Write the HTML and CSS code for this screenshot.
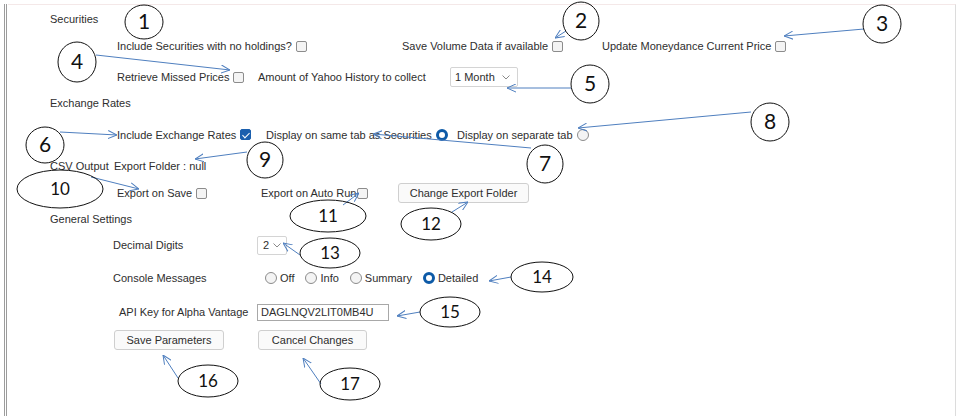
FILE: index.html
```html
<!DOCTYPE html>
<html>
<head>
<meta charset="utf-8">
<title>Parameters</title>
<link rel="stylesheet" href="styles.css">
</head>
<body>
<div class="frame">
  <div class="panel">
    <div class="heading h-sec">Securities</div>

    <div class="row r1">
      <div class="cell w285"><span class="lbl">Include Securities with no holdings?</span><span class="box"></span></div>
      <div class="cell w200"><span class="lbl">Save Volume Data if available</span><span class="box"></span></div>
      <div class="cell"><span class="lbl">Update Moneydance Current Price</span><span class="box"></span></div>
    </div>

    <div class="row r2">
      <div class="cell w141"><span class="lbl">Retrieve Missed Prices</span><span class="box"></span></div>
      <div class="cell w192"><span class="lbl">Amount of Yahoo History to collect</span></div>
      <div class="select sel-month"><span>1 Month</span><svg class="chev" width="8" height="5" viewBox="0 0 8 5"><polyline points="0.5,0.5 4,4 7.5,0.5" fill="none" stroke="#8a8a8a" stroke-width="1"/></svg></div>
    </div>

    <div class="heading h-ex">Exchange Rates</div>

    <div class="row r3">
      <div class="cell w149"><span class="lbl">Include Exchange Rates</span><span class="box on"></span></div>
      <div class="cell w191"><span class="lbl">Display on same tab as Securities</span><span class="radio on"></span></div>
      <div class="cell"><span class="lbl">Display on separate tab</span><span class="radio"></span></div>
    </div>

    <div class="heading h-csv"><span class="csv-title">CSV Output</span><span class="lbl">Export Folder : null</span></div>

    <div class="row r4">
      <div class="cell w144"><span class="lbl">Export on Save</span><span class="box"></span></div>
      <div class="cell w137"><span class="lbl">Export on Auto Run</span><span class="box tight"></span></div>
      <div class="btn btn-export">Change Export Folder</div>
    </div>

    <div class="heading h-gen">General Settings</div>

    <div class="grow g-dec">
      <span class="glabel">Decimal Digits</span>
      <div class="select sel-dec"><span>2</span><svg class="chev" width="8" height="5" viewBox="0 0 8 5"><polyline points="0.5,0.5 4,4 7.5,0.5" fill="none" stroke="#8a8a8a" stroke-width="1"/></svg></div>
    </div>

    <div class="grow g-con">
      <span class="glabel">Console Messages</span>
      <div class="radios">
        <div class="opt"><span class="radio"></span><span class="lbl">Off</span></div>
        <div class="opt"><span class="radio"></span><span class="lbl">Info</span></div>
        <div class="opt"><span class="radio"></span><span class="lbl">Summary</span></div>
        <div class="opt"><span class="radio on"></span><span class="lbl">Detailed</span></div>
      </div>
    </div>

    <div class="grow g-api">
      <span class="glabel api">API Key for Alpha Vantage</span>
      <div class="input">DAGLNQV2LIT0MB4U</div>
    </div>

    <div class="btnrow">
      <div class="btn btn-save">Save Parameters</div>
      <div class="btn btn-cancel">Cancel Changes</div>
    </div>
  </div>
</div>

<svg class="notes" width="960" height="416" viewBox="0 0 960 416">
  <defs>
    <marker id="ah" viewBox="0 0 10 10" refX="10" refY="5" markerWidth="9" markerHeight="9" markerUnits="userSpaceOnUse" orient="auto">
      <path d="M0,0.5 L10,5 L0,9.5" fill="none" stroke="#4f7fbf" stroke-width="1.1"/>
    </marker>
  </defs>
  <g class="arrows" stroke="#4f7fbf" stroke-width="1" fill="none" marker-end="url(#ah)">
    <line x1="566" y1="31" x2="555" y2="38"/>
    <line x1="864" y1="29" x2="784" y2="36"/>
    <line x1="96" y1="55" x2="230" y2="70"/>
    <line x1="571" y1="88" x2="507" y2="88"/>
    <line x1="60" y1="132" x2="117" y2="135"/>
    <line x1="531" y1="148" x2="373" y2="134"/>
    <line x1="751" y1="112" x2="578" y2="128"/>
    <line x1="247" y1="152" x2="195" y2="159"/>
    <line x1="91" y1="177" x2="139" y2="189"/>
    <line x1="343" y1="205" x2="359" y2="193"/>
    <line x1="452" y1="212" x2="468" y2="202"/>
    <line x1="300" y1="255" x2="283" y2="243"/>
    <line x1="511" y1="277" x2="489" y2="281"/>
    <line x1="420" y1="312" x2="397" y2="316"/>
    <line x1="178" y1="378" x2="163" y2="355"/>
    <line x1="321" y1="384" x2="303" y2="358"/>
  </g>
  <g class="bubbles" stroke="#111" stroke-width="1" fill="none">
    <ellipse cx="144" cy="22" rx="19" ry="17"/>
    <ellipse cx="581" cy="21" rx="18" ry="19"/>
    <ellipse cx="882" cy="24" rx="19" ry="19"/>
    <ellipse cx="77" cy="62" rx="19" ry="20"/>
    <ellipse cx="590" cy="84" rx="19" ry="19"/>
    <ellipse cx="45" cy="145" rx="19" ry="18"/>
    <ellipse cx="545" cy="164" rx="18" ry="19"/>
    <ellipse cx="770" cy="122" rx="19" ry="19"/>
    <ellipse cx="265" cy="160" rx="18" ry="18"/>
    <ellipse cx="60" cy="189" rx="43" ry="19"/>
    <ellipse cx="328" cy="216" rx="38" ry="16"/>
    <ellipse cx="431" cy="224" rx="30" ry="16"/>
    <ellipse cx="330" cy="253" rx="30" ry="15"/>
    <ellipse cx="542" cy="277" rx="31" ry="15"/>
    <ellipse cx="450" cy="312" rx="30" ry="15"/>
    <ellipse cx="208" cy="381" rx="30" ry="16"/>
    <ellipse cx="350" cy="384" rx="30" ry="16"/>
  </g>
  <g class="nums big" text-anchor="middle">
    <text x="144" y="29">1</text>
    <text x="581" y="28">2</text>
    <text x="882" y="31">3</text>
    <text x="77" y="69">4</text>
    <text x="590" y="91">5</text>
    <text x="45" y="152">6</text>
    <text x="545" y="171">7</text>
    <text x="770" y="129">8</text>
    <text x="265" y="167">9</text>
  </g>
  <g class="nums small" text-anchor="middle">
    <text x="60" y="195">10</text>
    <text x="328" y="222">11</text>
    <text x="431" y="230">12</text>
    <text x="330" y="259">13</text>
    <text x="542" y="283">14</text>
    <text x="450" y="318">15</text>
    <text x="208" y="387">16</text>
    <text x="350" y="390">17</text>
  </g>
</svg>
</body>
</html>
```

FILE: styles.css
```css
* { box-sizing: border-box; }

html, body {
  margin: 0;
  padding: 0;
  background: #ffffff;
}

body {
  position: relative;
  width: 960px;
  height: 416px;
  overflow: hidden;
  font-family: "Liberation Sans", Arial, sans-serif;
  font-size: 11px;
  color: #2e2e2e;
}

.frame {
  margin: 4px 0 0 4px;
  width: 952px;
  height: 412px;
  border-left: 3px double #9c9c9c;
}

.panel {
  margin-left: 1px;
  height: 100%;
  border-top: 1px solid #f4e8e8;
  border-right: 1px solid #dcdcdc;
  padding-top: 4px;
}

.heading {
  display: flex;
  align-items: center;
  padding-left: 42px;
}
.h-sec { height: 20px; }
.h-ex { height: 24px; }
.h-csv { height: 24px; }
.h-gen { height: 22px; }
.csv-title { width: 64px; }

.row {
  display: flex;
  align-items: center;
  padding-left: 109px;
}
.r1 { height: 34px; }
.r2 { height: 28px; }
.r3 { height: 39px; }
.r4 { height: 30px; }

.cell {
  display: flex;
  align-items: center;
  gap: 4px;
  white-space: nowrap;
}
.w285 { width: 285px; }
.w200 { width: 200px; }
.w141 { width: 141px; }
.w192 { width: 192px; }
.w149 { width: 149px; }
.w191 { width: 191px; }
.w144 { width: 144px; }
.w137 { width: 137px; }

.lbl { white-space: nowrap; }

.box {
  position: relative;
  display: inline-block;
  width: 11px;
  height: 11px;
  flex: none;
  border: 1px solid #8c8c8c;
  border-radius: 2px;
  background: #f4f4f4;
}
.box.tight { margin-left: -3px; }
.box.on {
  background: #1b5fae;
  border-color: #1b5fae;
}
.box.on::after {
  content: "";
  position: absolute;
  left: 3px;
  top: 1px;
  width: 3px;
  height: 6px;
  border: solid #ffffff;
  border-width: 0 1.5px 1.5px 0;
  transform: rotate(45deg);
}

.radio {
  display: inline-block;
  width: 12px;
  height: 12px;
  flex: none;
  border: 1px solid #8c8c8c;
  border-radius: 50%;
  background: #f4f4f4;
}
.radio.on {
  border: 3.5px solid #0d5aa7;
  background: #ffffff;
}

.select {
  display: flex;
  align-items: center;
  justify-content: space-between;
  height: 20px;
  border: 1px solid #d4d4d4;
  border-radius: 2px;
  background: #ffffff;
}
.sel-month {
  width: 68px;
  padding: 0 7px 0 4px;
}
.sel-dec {
  width: 30px;
  height: 19px;
  padding: 0 5px 0 5px;
}
.chev { display: block; }

.btn {
  display: flex;
  align-items: center;
  justify-content: center;
  height: 20px;
  border: 1px solid #cfcfcf;
  border-radius: 3px;
  background: #fafafa;
  white-space: nowrap;
}
.btn-export { width: 131px; }
.btn-save { width: 110px; }
.btn-cancel { width: 109px; margin-left: 34px; }

.grow {
  display: flex;
  align-items: center;
  padding-left: 105px;
}
.g-dec { height: 30px; }
.g-con { height: 36px; }
.g-api { height: 32px; }
.glabel { width: 144px; }
.glabel.api { padding-left: 6px; }

.radios {
  display: flex;
  align-items: center;
  padding-left: 8px;
}
.opt {
  display: flex;
  align-items: center;
  gap: 3px;
  margin-right: 11px;
}

.input {
  display: flex;
  align-items: center;
  width: 132px;
  height: 17px;
  padding-left: 3px;
  border: 1px solid #a8a8a8;
  background: #ffffff;
  white-space: nowrap;
  overflow: hidden;
}

.btnrow {
  display: flex;
  align-items: center;
  height: 24px;
  padding-left: 106px;
}

.notes {
  position: absolute;
  left: 0;
  top: 0;
  pointer-events: none;
}
.nums text {
  font-family: Lato, "Open Sans", sans-serif;
  fill: #111111;
}
.nums.big text { font-size: 21px; }
.nums.small text { font-size: 17px; }
```
